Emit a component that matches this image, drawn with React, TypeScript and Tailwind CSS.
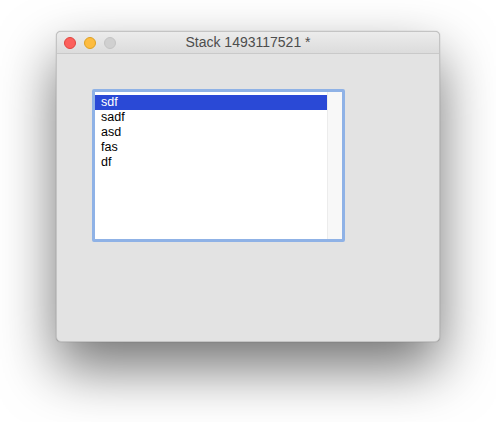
import { useState } from 'react'

const ITEMS = ['sdf', 'sadf', 'asd', 'fas', 'df']

function TrafficLights() {
  return (
    <div className="flex items-center gap-[8px] pl-[7px]">
      <span className="size-[12px] rounded-full border border-[#e0443e] bg-[#fc605c]" />
      <span className="size-[12px] rounded-full border border-[#dea123] bg-[#fdbc40]" />
      <span className="size-[12px] rounded-full border border-[#c4c4c4] bg-[#d0d0d0]" />
    </div>
  )
}

export default function App() {
  const [selected, setSelected] = useState(0)

  return (
    <div
      className="h-[422px] w-[496px] bg-white pt-[31px] pl-[56px]"
      style={{ fontFamily: '"Liberation Sans", Arial, sans-serif' }}
    >
      <div className="flex h-[311px] w-[384px] flex-col overflow-hidden rounded-[5px] border border-[#c4c4c4] bg-[#e3e3e3] shadow-[0_26px_56px_rgba(0,0,0,0.55),0_0_1px_rgba(0,0,0,0.4)]">
        <div className="relative flex h-[22px] shrink-0 items-center border-b border-[#c9c9c9] bg-gradient-to-b from-[#ececec] to-[#dcdcdc]">
          <TrafficLights />
          <div className="absolute inset-0 flex items-center justify-center text-[14px] text-[#4d4d4d]">
            Stack 1493117521 *
          </div>
        </div>

        <div className="pt-[35px] pl-[35px]">
          <div className="h-[153px] w-[253px] rounded-[2px] border-[3px] border-[#8fb2e6] bg-white">
            <div className="flex h-full">
              <div className="flex-1 pt-[3px]">
                {ITEMS.map((item, idx) => (
                  <div
                    key={item}
                    onClick={() => setSelected(idx)}
                    className={`h-[15px] pl-[6px] text-[12.5px] leading-[15px] ${
                      selected === idx ? 'bg-[#2a49d6] text-white' : 'text-black'
                    }`}
                  >
                    {item}
                  </div>
                ))}
              </div>
              <div className="w-[15px] border-l border-[#ececec] bg-[#f8f8f8]" />
            </div>
          </div>
        </div>
      </div>
    </div>
  )
}
